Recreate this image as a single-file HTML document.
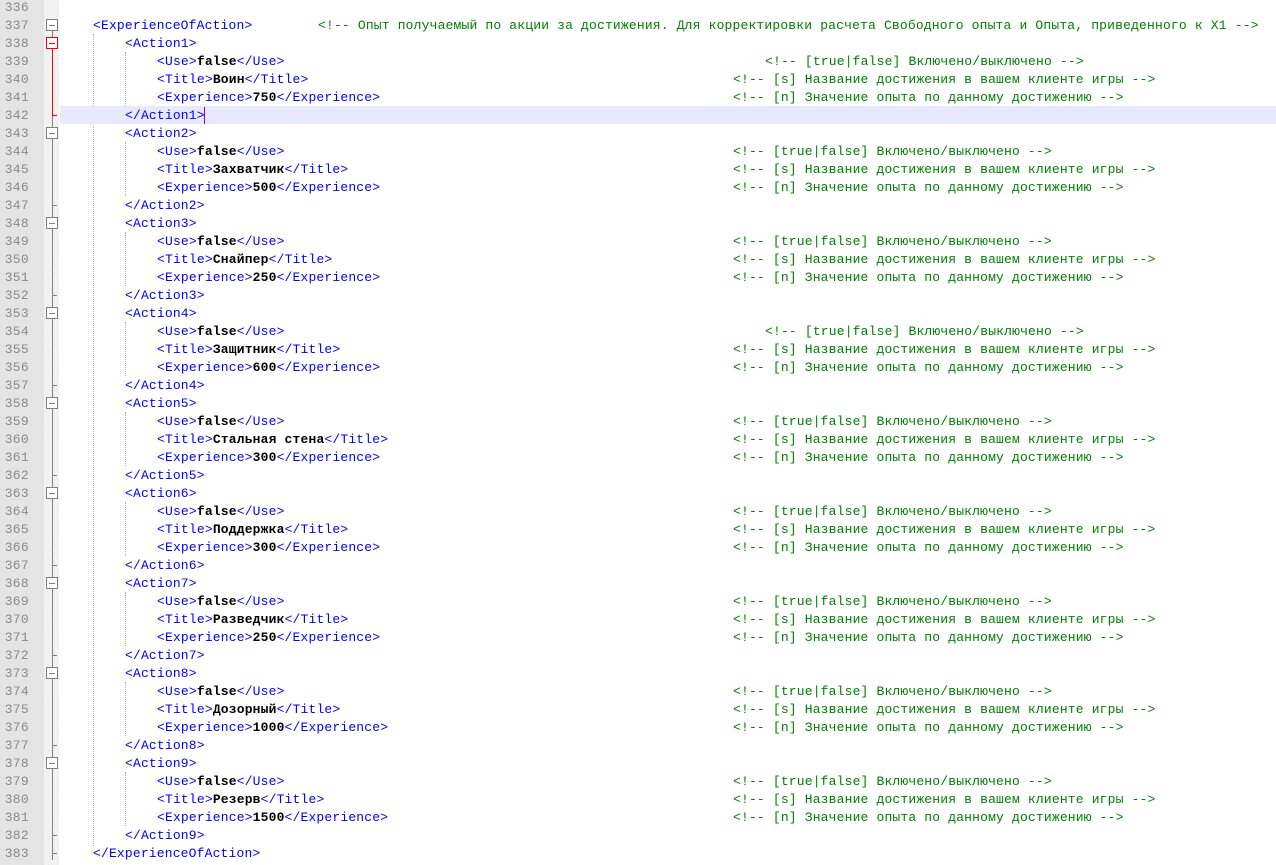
<!DOCTYPE html><html><head><meta charset="utf-8"><style>
body{margin:0;width:1276px;height:865px;overflow:hidden;background:#fff;position:relative;font-family:"Liberation Mono","DejaVu Sans Mono",monospace;font-size:13px;letter-spacing:0.17px}
#gut{position:absolute;left:0;top:0;width:44px;height:865px;background:#e4e4e4}
#fold{position:absolute;left:44px;top:0;width:15px;height:865px;background:#f4f4f4;background-image:repeating-linear-gradient(45deg,#ececec 0 1px,transparent 1px 3px)}
.r{position:absolute;left:0;height:18px;line-height:18px;width:1276px;white-space:pre;margin-top:1px}
.n{position:absolute;left:0;width:29px;text-align:right;color:#8a8a8a;letter-spacing:0.3px}
.c{position:absolute;color:#0000ff}
.c b{color:#000}
.m{position:absolute;color:#008000}
.hl{background:#e8e8ff}
.g{position:absolute;width:0;border-left:1px dotted #b0b0b0}
.vl{position:absolute;left:52px;width:1px;background:#808080}
.bx{position:absolute;left:46px;width:10px;height:10px;border:1px solid #808080;background:#fff}
.bx:after{content:"";position:absolute;left:2px;top:5px;width:6px;height:1px;background:#808080}
.rd{border-color:#f00}.rd:after{background:#f00}
.tk{position:absolute;left:52px;width:5px;height:1px;background:#808080}
</style></head><body>
<div id="gut"></div><div id="fold"></div>
<div class="vl" style="top:20px;height:840px"></div>
<div class="vl" style="top:38px;height:78px;background:#f00"></div>
<div class="tk" style="top:115px;background:#f00"></div>
<div class="g" style="left:93px;top:34px;height:812px"></div>
<div class="g" style="left:125px;top:52px;height:54px"></div>
<div class="g" style="left:125px;top:142px;height:54px"></div>
<div class="g" style="left:125px;top:232px;height:54px"></div>
<div class="g" style="left:125px;top:322px;height:54px"></div>
<div class="g" style="left:125px;top:412px;height:54px"></div>
<div class="g" style="left:125px;top:502px;height:54px"></div>
<div class="g" style="left:125px;top:592px;height:54px"></div>
<div class="g" style="left:125px;top:682px;height:54px"></div>
<div class="g" style="left:125px;top:772px;height:54px"></div>

<div class="hl" style="position:absolute;left:60px;right:0;top:106px;height:18px"></div>
<div class="r" style="top:-2px"><span class="n">336</span></div>
<div class="r" style="top:16px"><span class="n">337</span><span class="c" style="left:93px">&lt;ExperienceOfAction&gt;</span><span class="m" style="left:318px">&lt;!-- Опыт получаемый по акции за достижения. Для корректировки расчета Свободного опыта и Опыта, приведенного к X1 --&gt;</span></div>
<div class="r" style="top:34px"><span class="n">338</span><span class="c" style="left:125px">&lt;Action1&gt;</span></div>
<div class="r" style="top:52px"><span class="n">339</span><span class="c" style="left:157px">&lt;Use&gt;<b>false</b>&lt;/Use&gt;</span><span class="m" style="left:765px">&lt;!-- [true|false] Включено/выключено --&gt;</span></div>
<div class="r" style="top:70px"><span class="n">340</span><span class="c" style="left:157px">&lt;Title&gt;<b>Воин</b>&lt;/Title&gt;</span><span class="m" style="left:733px">&lt;!-- [s] Название достижения в вашем клиенте игры --&gt;</span></div>
<div class="r" style="top:88px"><span class="n">341</span><span class="c" style="left:157px">&lt;Experience&gt;<b>750</b>&lt;/Experience&gt;</span><span class="m" style="left:733px">&lt;!-- [n] Значение опыта по данному достижению --&gt;</span></div>
<div class="r" style="top:106px"><span class="n">342</span><span class="c" style="left:125px">&lt;/Action1&gt;</span><span style="position:absolute;left:204px;top:0px;width:1px;height:17px;background:#8000ff"></span></div>

<div class="r" style="top:124px"><span class="n">343</span><span class="c" style="left:125px">&lt;Action2&gt;</span></div>
<div class="r" style="top:142px"><span class="n">344</span><span class="c" style="left:157px">&lt;Use&gt;<b>false</b>&lt;/Use&gt;</span><span class="m" style="left:733px">&lt;!-- [true|false] Включено/выключено --&gt;</span></div>
<div class="r" style="top:160px"><span class="n">345</span><span class="c" style="left:157px">&lt;Title&gt;<b>Захватчик</b>&lt;/Title&gt;</span><span class="m" style="left:733px">&lt;!-- [s] Название достижения в вашем клиенте игры --&gt;</span></div>
<div class="r" style="top:178px"><span class="n">346</span><span class="c" style="left:157px">&lt;Experience&gt;<b>500</b>&lt;/Experience&gt;</span><span class="m" style="left:733px">&lt;!-- [n] Значение опыта по данному достижению --&gt;</span></div>
<div class="r" style="top:196px"><span class="n">347</span><span class="c" style="left:125px">&lt;/Action2&gt;</span></div>

<div class="r" style="top:214px"><span class="n">348</span><span class="c" style="left:125px">&lt;Action3&gt;</span></div>
<div class="r" style="top:232px"><span class="n">349</span><span class="c" style="left:157px">&lt;Use&gt;<b>false</b>&lt;/Use&gt;</span><span class="m" style="left:733px">&lt;!-- [true|false] Включено/выключено --&gt;</span></div>
<div class="r" style="top:250px"><span class="n">350</span><span class="c" style="left:157px">&lt;Title&gt;<b>Снайпер</b>&lt;/Title&gt;</span><span class="m" style="left:733px">&lt;!-- [s] Название достижения в вашем клиенте игры --&gt;</span></div>
<div class="r" style="top:268px"><span class="n">351</span><span class="c" style="left:157px">&lt;Experience&gt;<b>250</b>&lt;/Experience&gt;</span><span class="m" style="left:733px">&lt;!-- [n] Значение опыта по данному достижению --&gt;</span></div>
<div class="r" style="top:286px"><span class="n">352</span><span class="c" style="left:125px">&lt;/Action3&gt;</span></div>

<div class="r" style="top:304px"><span class="n">353</span><span class="c" style="left:125px">&lt;Action4&gt;</span></div>
<div class="r" style="top:322px"><span class="n">354</span><span class="c" style="left:157px">&lt;Use&gt;<b>false</b>&lt;/Use&gt;</span><span class="m" style="left:765px">&lt;!-- [true|false] Включено/выключено --&gt;</span></div>
<div class="r" style="top:340px"><span class="n">355</span><span class="c" style="left:157px">&lt;Title&gt;<b>Защитник</b>&lt;/Title&gt;</span><span class="m" style="left:733px">&lt;!-- [s] Название достижения в вашем клиенте игры --&gt;</span></div>
<div class="r" style="top:358px"><span class="n">356</span><span class="c" style="left:157px">&lt;Experience&gt;<b>600</b>&lt;/Experience&gt;</span><span class="m" style="left:733px">&lt;!-- [n] Значение опыта по данному достижению --&gt;</span></div>
<div class="r" style="top:376px"><span class="n">357</span><span class="c" style="left:125px">&lt;/Action4&gt;</span></div>

<div class="r" style="top:394px"><span class="n">358</span><span class="c" style="left:125px">&lt;Action5&gt;</span></div>
<div class="r" style="top:412px"><span class="n">359</span><span class="c" style="left:157px">&lt;Use&gt;<b>false</b>&lt;/Use&gt;</span><span class="m" style="left:733px">&lt;!-- [true|false] Включено/выключено --&gt;</span></div>
<div class="r" style="top:430px"><span class="n">360</span><span class="c" style="left:157px">&lt;Title&gt;<b>Стальная стена</b>&lt;/Title&gt;</span><span class="m" style="left:733px">&lt;!-- [s] Название достижения в вашем клиенте игры --&gt;</span></div>
<div class="r" style="top:448px"><span class="n">361</span><span class="c" style="left:157px">&lt;Experience&gt;<b>300</b>&lt;/Experience&gt;</span><span class="m" style="left:733px">&lt;!-- [n] Значение опыта по данному достижению --&gt;</span></div>
<div class="r" style="top:466px"><span class="n">362</span><span class="c" style="left:125px">&lt;/Action5&gt;</span></div>

<div class="r" style="top:484px"><span class="n">363</span><span class="c" style="left:125px">&lt;Action6&gt;</span></div>
<div class="r" style="top:502px"><span class="n">364</span><span class="c" style="left:157px">&lt;Use&gt;<b>false</b>&lt;/Use&gt;</span><span class="m" style="left:733px">&lt;!-- [true|false] Включено/выключено --&gt;</span></div>
<div class="r" style="top:520px"><span class="n">365</span><span class="c" style="left:157px">&lt;Title&gt;<b>Поддержка</b>&lt;/Title&gt;</span><span class="m" style="left:733px">&lt;!-- [s] Название достижения в вашем клиенте игры --&gt;</span></div>
<div class="r" style="top:538px"><span class="n">366</span><span class="c" style="left:157px">&lt;Experience&gt;<b>300</b>&lt;/Experience&gt;</span><span class="m" style="left:733px">&lt;!-- [n] Значение опыта по данному достижению --&gt;</span></div>
<div class="r" style="top:556px"><span class="n">367</span><span class="c" style="left:125px">&lt;/Action6&gt;</span></div>

<div class="r" style="top:574px"><span class="n">368</span><span class="c" style="left:125px">&lt;Action7&gt;</span></div>
<div class="r" style="top:592px"><span class="n">369</span><span class="c" style="left:157px">&lt;Use&gt;<b>false</b>&lt;/Use&gt;</span><span class="m" style="left:733px">&lt;!-- [true|false] Включено/выключено --&gt;</span></div>
<div class="r" style="top:610px"><span class="n">370</span><span class="c" style="left:157px">&lt;Title&gt;<b>Разведчик</b>&lt;/Title&gt;</span><span class="m" style="left:733px">&lt;!-- [s] Название достижения в вашем клиенте игры --&gt;</span></div>
<div class="r" style="top:628px"><span class="n">371</span><span class="c" style="left:157px">&lt;Experience&gt;<b>250</b>&lt;/Experience&gt;</span><span class="m" style="left:733px">&lt;!-- [n] Значение опыта по данному достижению --&gt;</span></div>
<div class="r" style="top:646px"><span class="n">372</span><span class="c" style="left:125px">&lt;/Action7&gt;</span></div>

<div class="r" style="top:664px"><span class="n">373</span><span class="c" style="left:125px">&lt;Action8&gt;</span></div>
<div class="r" style="top:682px"><span class="n">374</span><span class="c" style="left:157px">&lt;Use&gt;<b>false</b>&lt;/Use&gt;</span><span class="m" style="left:733px">&lt;!-- [true|false] Включено/выключено --&gt;</span></div>
<div class="r" style="top:700px"><span class="n">375</span><span class="c" style="left:157px">&lt;Title&gt;<b>Дозорный</b>&lt;/Title&gt;</span><span class="m" style="left:733px">&lt;!-- [s] Название достижения в вашем клиенте игры --&gt;</span></div>
<div class="r" style="top:718px"><span class="n">376</span><span class="c" style="left:157px">&lt;Experience&gt;<b>1000</b>&lt;/Experience&gt;</span><span class="m" style="left:733px">&lt;!-- [n] Значение опыта по данному достижению --&gt;</span></div>
<div class="r" style="top:736px"><span class="n">377</span><span class="c" style="left:125px">&lt;/Action8&gt;</span></div>

<div class="r" style="top:754px"><span class="n">378</span><span class="c" style="left:125px">&lt;Action9&gt;</span></div>
<div class="r" style="top:772px"><span class="n">379</span><span class="c" style="left:157px">&lt;Use&gt;<b>false</b>&lt;/Use&gt;</span><span class="m" style="left:733px">&lt;!-- [true|false] Включено/выключено --&gt;</span></div>
<div class="r" style="top:790px"><span class="n">380</span><span class="c" style="left:157px">&lt;Title&gt;<b>Резерв</b>&lt;/Title&gt;</span><span class="m" style="left:733px">&lt;!-- [s] Название достижения в вашем клиенте игры --&gt;</span></div>
<div class="r" style="top:808px"><span class="n">381</span><span class="c" style="left:157px">&lt;Experience&gt;<b>1500</b>&lt;/Experience&gt;</span><span class="m" style="left:733px">&lt;!-- [n] Значение опыта по данному достижению --&gt;</span></div>
<div class="r" style="top:826px"><span class="n">382</span><span class="c" style="left:125px">&lt;/Action9&gt;</span></div>
<div class="r" style="top:844px"><span class="n">383</span><span class="c" style="left:93px">&lt;/ExperienceOfAction&gt;</span></div>

<div class="bx" style="top:19px"></div>
<div class="bx rd" style="top:37px"></div>
<div class="bx" style="top:127px"></div><div class="tk" style="top:205px"></div>
<div class="bx" style="top:217px"></div><div class="tk" style="top:295px"></div>
<div class="bx" style="top:307px"></div><div class="tk" style="top:385px"></div>
<div class="bx" style="top:397px"></div><div class="tk" style="top:475px"></div>
<div class="bx" style="top:487px"></div><div class="tk" style="top:565px"></div>
<div class="bx" style="top:577px"></div><div class="tk" style="top:655px"></div>
<div class="bx" style="top:667px"></div><div class="tk" style="top:745px"></div>
<div class="bx" style="top:757px"></div><div class="tk" style="top:835px"></div>
<div class="tk" style="top:853px"></div>
</body></html>
